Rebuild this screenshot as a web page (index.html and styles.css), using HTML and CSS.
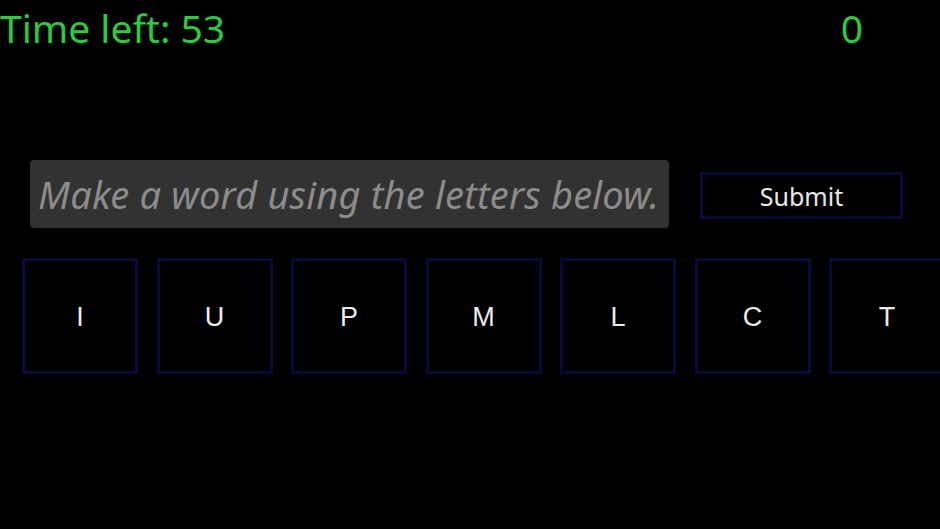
FILE: index.html
```html
<!DOCTYPE html>
<html>
<head>
<meta charset="utf-8">
<link rel="stylesheet" href="styles.css">
</head>
<body>
<div class="game">
  <header class="top">
    <div class="timer">Time left: 53</div>
    <div class="score">0</div>
  </header>
  <div class="entry">
    <input class="word" type="text" placeholder="Make a word using the letters below.">
    <button class="submit">Submit</button>
  </div>
  <div class="tiles">
    <div class="tile">I</div>
    <div class="tile">U</div>
    <div class="tile">P</div>
    <div class="tile">M</div>
    <div class="tile">L</div>
    <div class="tile">C</div>
    <div class="tile">T</div>
  </div>
</div>
</body>
</html>
```
FILE: styles.css
```css
html, body {
  margin: 0;
  padding: 0;
  background: #000;
  width: 940px;
  height: 529px;
  overflow: hidden;
}
.game {
  font-family: "Noto Sans", "DejaVu Sans", sans-serif;
}
.top {
  display: flex;
  justify-content: space-between;
  align-items: flex-start;
  height: 60px;
}
.timer, .score {
  color: #2ccb3e;
  font-size: 39px;
  line-height: 56px;
}
.timer {
  margin-left: 0;
}
.score {
  margin-right: 77px;
}
.entry {
  display: flex;
  align-items: center;
  margin-top: 100px;
  padding-left: 30px;
  gap: 31px;
}
.word {
  box-sizing: border-box;
  width: 639px;
  height: 68px;
  background: #323232;
  border: none;
  border-radius: 4px;
  padding: 0 8px;
  font-family: "Noto Sans", "DejaVu Sans", sans-serif;
  font-size: 38px;
  font-style: italic;
  color: #ddd;
  outline: none;
}
.word::placeholder {
  color: #8c8c8c;
  letter-spacing: 0.2px;
}
.submit {
  box-sizing: border-box;
  width: 203px;
  height: 47px;
  background: #000;
  border: 3px solid #0a0a36;
  color: #e8e8e8;
  font-family: "Noto Sans", "DejaVu Sans", sans-serif;
  font-size: 25px;
  margin-top: 3px;
}
.tiles {
  display: flex;
  gap: 18.5px;
  margin-top: 30px;
  padding-left: 22px;
}
.tile {
  box-sizing: border-box;
  flex: 0 0 116px;
  height: 116px;
  border: 3px solid #0a0a38;
  display: flex;
  align-items: center;
  justify-content: center;
  color: #ececec;
  font-family: "Liberation Sans", Arial, sans-serif;
  font-size: 27px;
  padding-top: 3px;
}
```
